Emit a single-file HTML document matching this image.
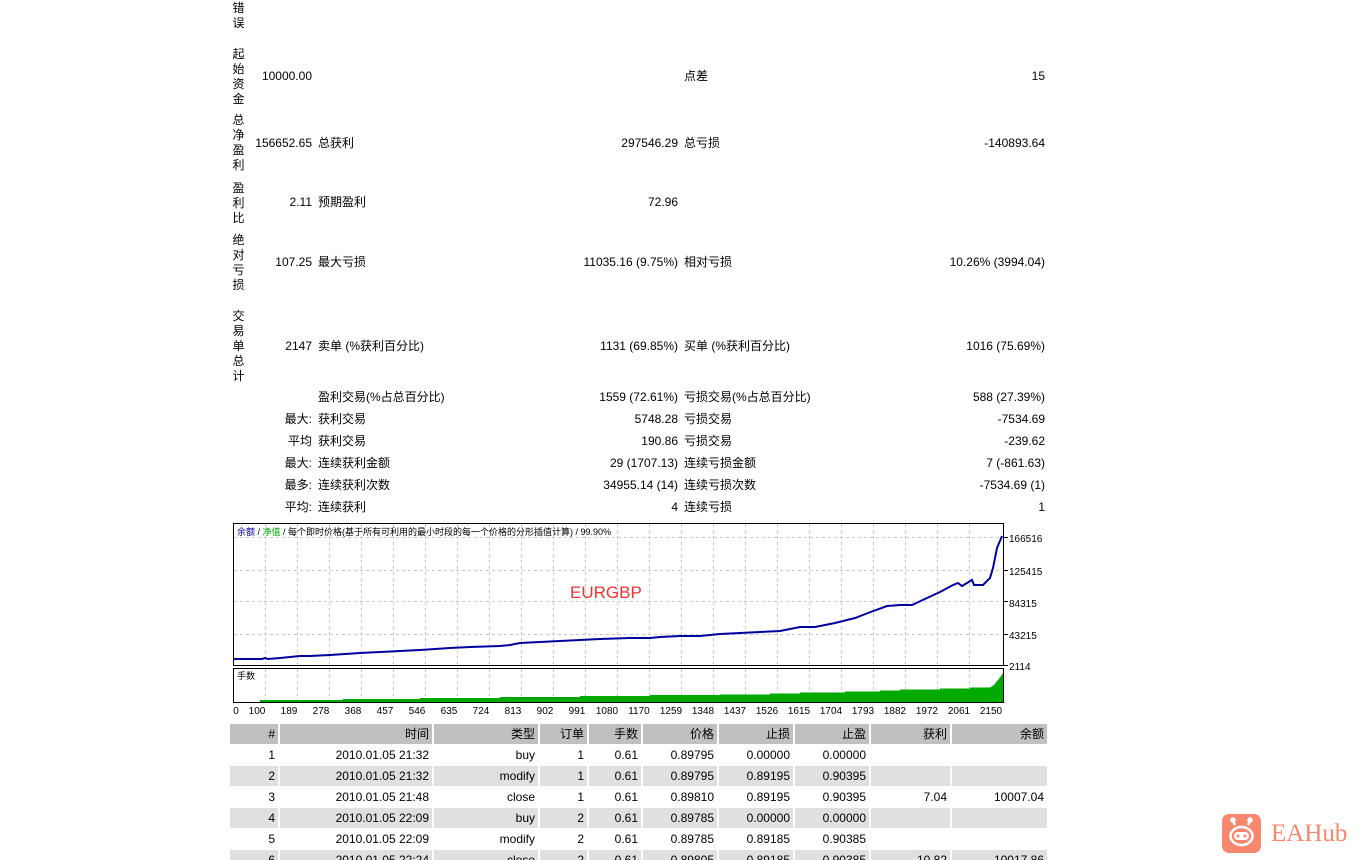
<!DOCTYPE html>
<html><head><meta charset="utf-8">
<style>
html,body{margin:0;padding:0;background:#fff;width:1361px;height:860px;overflow:hidden;position:relative}
body{font-family:"Liberation Sans","Noto Sans CJK SC",sans-serif;font-size:12px;color:#000}
.t{position:absolute;white-space:nowrap;line-height:14px}
.r{text-align:right}
.v{position:absolute;left:232px;width:13px;line-height:15px;font-size:12px;text-align:center}
table{position:absolute;left:230px;top:723px;border-collapse:separate;border-spacing:2px 1px;margin-left:-2px;font-size:12px}
td{height:20px;padding:0 3px 0 0;text-align:right;line-height:20px;white-space:nowrap}
tr.h td{background:#c0c0c0}
tr.g td{background:#e0e0e0}
</style></head><body>
<div class="v" style="top:1px">错<br>误</div>
<div class="v" style="top:47px">起<br>始<br>资<br>金</div>
<div class="v" style="top:113px">总<br>净<br>盈<br>利</div>
<div class="v" style="top:181px">盈<br>利<br>比</div>
<div class="v" style="top:233px">绝<br>对<br>亏<br>损</div>
<div class="v" style="top:309px">交<br>易<br>单<br>总<br>计</div>

<div class="t r" style="right:1049px;top:69px">10000.00</div>
<div class="t" style="left:684px;top:69px">点差</div>
<div class="t r" style="right:316px;top:69px">15</div>

<div class="t r" style="right:1049px;top:136px">156652.65</div>
<div class="t" style="left:318px;top:136px">总获利</div>
<div class="t r" style="right:683px;top:136px">297546.29</div>
<div class="t" style="left:684px;top:136px">总亏损</div>
<div class="t r" style="right:316px;top:136px">-140893.64</div>

<div class="t r" style="right:1049px;top:195px">2.11</div>
<div class="t" style="left:318px;top:195px">预期盈利</div>
<div class="t r" style="right:683px;top:195px">72.96</div>

<div class="t r" style="right:1049px;top:255px">107.25</div>
<div class="t" style="left:318px;top:255px">最大亏损</div>
<div class="t r" style="right:683px;top:255px">11035.16 (9.75%)</div>
<div class="t" style="left:684px;top:255px">相对亏损</div>
<div class="t r" style="right:316px;top:255px">10.26% (3994.04)</div>

<div class="t r" style="right:1049px;top:339px">2147</div>
<div class="t" style="left:318px;top:339px">卖单 (%获利百分比)</div>
<div class="t r" style="right:683px;top:339px">1131 (69.85%)</div>
<div class="t" style="left:684px;top:339px">买单 (%获利百分比)</div>
<div class="t r" style="right:316px;top:339px">1016 (75.69%)</div>

<div class="t" style="left:318px;top:390px">盈利交易(%占总百分比)</div>
<div class="t r" style="right:683px;top:390px">1559 (72.61%)</div>
<div class="t" style="left:684px;top:390px">亏损交易(%占总百分比)</div>
<div class="t r" style="right:316px;top:390px">588 (27.39%)</div>

<div class="t r" style="right:1049px;top:412px">最大:</div>
<div class="t" style="left:318px;top:412px">获利交易</div>
<div class="t r" style="right:683px;top:412px">5748.28</div>
<div class="t" style="left:684px;top:412px">亏损交易</div>
<div class="t r" style="right:316px;top:412px">-7534.69</div>

<div class="t r" style="right:1049px;top:434px">平均</div>
<div class="t" style="left:318px;top:434px">获利交易</div>
<div class="t r" style="right:683px;top:434px">190.86</div>
<div class="t" style="left:684px;top:434px">亏损交易</div>
<div class="t r" style="right:316px;top:434px">-239.62</div>

<div class="t r" style="right:1049px;top:456px">最大:</div>
<div class="t" style="left:318px;top:456px">连续获利金额</div>
<div class="t r" style="right:683px;top:456px">29 (1707.13)</div>
<div class="t" style="left:684px;top:456px">连续亏损金额</div>
<div class="t r" style="right:316px;top:456px">7 (-861.63)</div>

<div class="t r" style="right:1049px;top:478px">最多:</div>
<div class="t" style="left:318px;top:478px">连续获利次数</div>
<div class="t r" style="right:683px;top:478px">34955.14 (14)</div>
<div class="t" style="left:684px;top:478px">连续亏损次数</div>
<div class="t r" style="right:316px;top:478px">-7534.69 (1)</div>

<div class="t r" style="right:1049px;top:500px">平均:</div>
<div class="t" style="left:318px;top:500px">连续获利</div>
<div class="t r" style="right:683px;top:500px">4</div>
<div class="t" style="left:684px;top:500px">连续亏损</div>
<div class="t r" style="right:316px;top:500px">1</div>

<svg style="position:absolute;left:0;top:0" width="1361" height="720" font-family="Liberation Sans,Noto Sans CJK SC,sans-serif">
<g stroke="#c8c8c8" stroke-dasharray="3,3" stroke-width="1">
<line x1="234" y1="537.5" x2="1003" y2="537.5"/><line x1="234" y1="570.5" x2="1003" y2="570.5"/><line x1="234" y1="601.5" x2="1003" y2="601.5"/><line x1="234" y1="634.5" x2="1003" y2="634.5"/>
<path d="M265.5 524V666M297.5 524V666M329.5 524V666M361.5 524V666M393.5 524V666M425.5 524V666M457.5 524V666M489.5 524V666M521.5 524V666M553.5 524V666M585.5 524V666M617.5 524V666M649.5 524V666M681.5 524V666M713.5 524V666M745.5 524V666M777.5 524V666M809.5 524V666M841.5 524V666M873.5 524V666M905.5 524V666M937.5 524V666M969.5 524V666"/>
<path d="M265.5 669V702M297.5 669V702M329.5 669V702M361.5 669V702M393.5 669V702M425.5 669V702M457.5 669V702M489.5 669V702M521.5 669V702M553.5 669V702M585.5 669V702M617.5 669V702M649.5 669V702M681.5 669V702M713.5 669V702M745.5 669V702M777.5 669V702M809.5 669V702M841.5 669V702M873.5 669V702M905.5 669V702M937.5 669V702M969.5 669V702"/>
</g>
<rect x="233.5" y="523.5" width="770" height="142" fill="none" stroke="#000"/>
<rect x="233.5" y="668.5" width="770" height="34" fill="none" stroke="#000"/>
<g stroke="#000"><line x1="1004" y1="537.5" x2="1008" y2="537.5"/><line x1="1004" y1="570.5" x2="1008" y2="570.5"/><line x1="1004" y1="601.5" x2="1008" y2="601.5"/><line x1="1004" y1="634.5" x2="1008" y2="634.5"/><line x1="1004" y1="665.5" x2="1008" y2="665.5"/></g>
<polygon fill="#00aa00" points="260,702 260,700 343,700 343,699 420,699 420,698 500,698 500,697 580,697 580,696 650,696 650,695 720,695 720,694.5 770,694.5 770,693.5 800,693.5 800,692.5 845,692.5 845,691.5 880,691.5 880,690.5 900,690.5 900,689.5 940,689.5 940,688.5 970,688.5 970,687.5 990,687.5 994,685 998,680 1001,676 1003,673 1003,702"/>
<polyline fill="none" stroke="#0000a0" stroke-width="2" points="234,659 262,659 265,658 268,659 280,658 300,656 310,656 330,655 345,654 360,653 380,652 400,651 420,650 450,648 470,647 500,646 510,645 520,643 560,641 580,640 600,639 630,638 650,638 660,637 680,636 700,636 720,634 740,633 760,632 780,631 800,627 815,627 835,623 855,618 868,613 887,606 900,605 912,605 927,598 940,592 953,585 958,583 962,586 972,580 974,585 983,585 990,578 993,568 997,548 1002,536"/>
<text x="237" y="535" font-size="9"><tspan fill="#0000a0">余额</tspan> / <tspan fill="#00aa00">净值</tspan> / 每个即时价格(基于所有可利用的最小时段的每一个价格的分形插值计算) / 99.90%</text>
<text x="237" y="679" font-size="9">手数</text>
<text x="570" y="598" font-size="17" fill="#ee3333">EURGBP</text>
<g font-size="10"><text x="1009" y="542">166516</text><text x="1009" y="575">125415</text><text x="1009" y="607">84315</text><text x="1009" y="639">43215</text><text x="1009" y="670">2114</text></g>
<g font-size="10" text-anchor="middle"><text x="236" y="714">0</text><text x="257" y="714">100</text><text x="289" y="714">189</text><text x="321" y="714">278</text><text x="353" y="714">368</text><text x="385" y="714">457</text><text x="417" y="714">546</text><text x="449" y="714">635</text><text x="481" y="714">724</text><text x="513" y="714">813</text><text x="545" y="714">902</text><text x="577" y="714">991</text><text x="607" y="714">1080</text><text x="639" y="714">1170</text><text x="671" y="714">1259</text><text x="703" y="714">1348</text><text x="735" y="714">1437</text><text x="767" y="714">1526</text><text x="799" y="714">1615</text><text x="831" y="714">1704</text><text x="863" y="714">1793</text><text x="895" y="714">1882</text><text x="927" y="714">1972</text><text x="959" y="714">2061</text><text x="991" y="714">2150</text></g>
</svg>

<table>
<tr class="h"><td style="width:45px">#</td><td style="width:149px">时间</td><td style="width:101px">类型</td><td style="width:44px">订单</td><td style="width:49px">手数</td><td style="width:71px">价格</td><td style="width:71px">止损</td><td style="width:71px">止盈</td><td style="width:76px">获利</td><td style="width:92px">余额</td></tr>
<tr><td>1</td><td>2010.01.05 21:32</td><td>buy</td><td>1</td><td>0.61</td><td>0.89795</td><td>0.00000</td><td>0.00000</td><td></td><td></td></tr>
<tr class="g"><td>2</td><td>2010.01.05 21:32</td><td>modify</td><td>1</td><td>0.61</td><td>0.89795</td><td>0.89195</td><td>0.90395</td><td></td><td></td></tr>
<tr><td>3</td><td>2010.01.05 21:48</td><td>close</td><td>1</td><td>0.61</td><td>0.89810</td><td>0.89195</td><td>0.90395</td><td>7.04</td><td>10007.04</td></tr>
<tr class="g"><td>4</td><td>2010.01.05 22:09</td><td>buy</td><td>2</td><td>0.61</td><td>0.89785</td><td>0.00000</td><td>0.00000</td><td></td><td></td></tr>
<tr><td>5</td><td>2010.01.05 22:09</td><td>modify</td><td>2</td><td>0.61</td><td>0.89785</td><td>0.89185</td><td>0.90385</td><td></td><td></td></tr>
<tr class="g"><td>6</td><td>2010.01.05 22:24</td><td>close</td><td>2</td><td>0.61</td><td>0.89805</td><td>0.89185</td><td>0.90385</td><td>10.82</td><td>10017.86</td></tr>
</table>

<div style="position:absolute;left:1222px;top:814px;width:39px;height:39px;border-radius:7px;background:#f7876e">
<svg width="39" height="39" viewBox="0 0 39 39"><g fill="none" stroke="#fff" stroke-width="2.5"><line x1="13" y1="11" x2="11" y2="7"/><line x1="26" y1="11" x2="28" y2="7"/><circle cx="11" cy="6" r="1.5" fill="#fff"/><circle cx="28" cy="6" r="1.5" fill="#fff"/><ellipse cx="19.5" cy="22" rx="11" ry="9"/></g><rect x="12" y="18" width="15" height="8" rx="4" fill="#fff"/><circle cx="16" cy="22" r="1.5" fill="#f7876e"/><circle cx="23" cy="22" r="1.5" fill="#f7876e"/></svg>
</div>
<div class="t" style="left:1271px;top:819px;font-family:'Liberation Serif',serif;font-size:25px;line-height:30px;color:#f7876e">EAHub</div>
</body></html>
